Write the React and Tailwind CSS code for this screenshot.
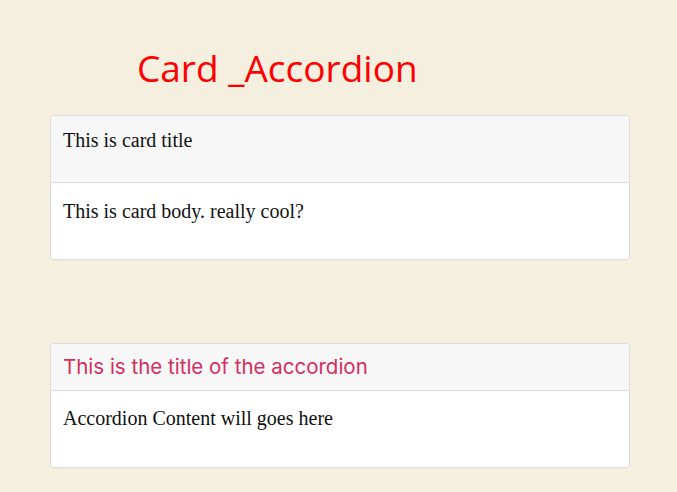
export default function App() {
  return (
    <div className="min-h-[492px] bg-[#f5efe0] pt-[40px] pb-[24px]">
      <h1 className="ml-[137px] text-[37px] leading-[56px] text-[#ff0000] font-['Open_Sans',sans-serif]">
        Card _Accordion
      </h1>
      <div className="mx-[50px] mt-[19px] w-[580px] rounded-[4px] border border-[#dcdcdc] bg-white overflow-hidden">
        <div className="h-[67px] bg-[#f7f7f7] border-b border-[#dcdcdc] px-[12px] pt-[11px] text-[20px] leading-[26px] text-[#111] font-['Liberation_Serif',serif]">
          This is card title
        </div>
        <div className="h-[76px] px-[12px] pt-[15px] text-[20px] leading-[26px] text-[#111] font-['Liberation_Serif',serif]">
          This is card body. really cool?
        </div>
      </div>
      <div className="mx-[50px] mt-[83px] w-[580px] rounded-[4px] border border-[#dcdcdc] bg-white overflow-hidden">
        <div className="h-[47px] bg-[#f7f7f7] border-b border-[#dcdcdc] px-[12px] pt-[9px] text-[20.5px] leading-[28px] text-[#d22f62] font-['Inter',sans-serif]">
          This is the title of the accordion
        </div>
        <div className="h-[76px] px-[12px] pt-[14px] text-[20px] leading-[26px] text-[#111] font-['Liberation_Serif',serif]">
          Accordion Content will goes here
        </div>
      </div>
    </div>
  );
}
